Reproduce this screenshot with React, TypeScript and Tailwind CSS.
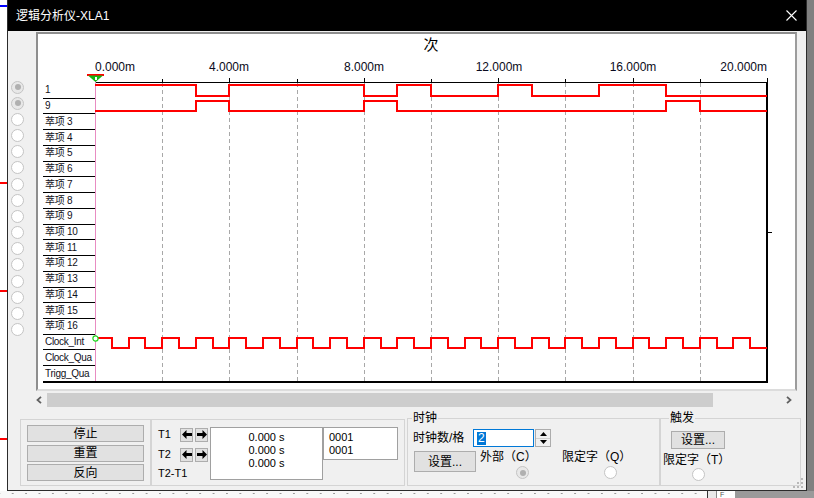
import React from "react";

/* ------------------ DATA ------------------ */
const ROW_H = 300 / 19;
const PX_PER_MS = 33.6;

const rowLabels = [
  "1",
  "9",
  ...Array.from({ length: 14 }, (_, i) => `萃项 ${i + 3}`),
  "Clock_Int",
  "Clock_Qua",
  "Trigg_Qua",
];

type Wave = { row: number; start: number; edges: number[] };

const waves: Wave[] = [
  { row: 0, start: 1, edges: [3, 4, 8, 9, 10, 12, 13, 15, 17] },
  { row: 1, start: 0, edges: [3, 4, 8, 9, 17, 18] },
  { row: 16, start: 1, edges: Array.from({ length: 39 }, (_, i) => (i + 1) / 2) },
];

const tickLabels = [
  { text: "0.000m", cls: "left-0" },
  { text: "4.000m", cls: "left-[134px] -translate-x-1/2" },
  { text: "8.000m", cls: "left-[269px] -translate-x-1/2" },
  { text: "12.000m", cls: "left-[404px] -translate-x-1/2" },
  { text: "16.000m", cls: "left-[538px] -translate-x-1/2" },
  { text: "20.000m", cls: "right-0" },
];

function wavePath(w: Wave) {
  const top = w.row * ROW_H;
  const hi = Math.round(top + 3.3);
  const lo = Math.round(top + 13.5);
  let lvl = w.start;
  let d = `M0 ${lvl ? hi : lo}`;
  for (const t of w.edges) {
    d += ` H${Math.round(t * PX_PER_MS)}`;
    lvl = 1 - lvl;
    d += ` V${lvl ? hi : lo}`;
  }
  return d + " H672";
}

/* ------------------ SMALL PARTS ------------------ */
function Radio({ on }: { on?: boolean }) {
  return on ? (
    <span className="flex h-[13px] w-[13px] items-center justify-center rounded-full border border-[#c4c4c4] bg-[#e8e8e8]">
      <span className="h-[6px] w-[6px] rounded-full bg-[#b0b0b0]" />
    </span>
  ) : (
    <span className="block h-[13px] w-[13px] rounded-full border border-[#c4c4c4] bg-white" />
  );
}

function ArrowBtn({ dir }: { dir: "l" | "r" }) {
  return (
    <span className="flex h-[14px] w-[13px] items-center justify-center border border-[#adadad] bg-[#e1e1e1]">
      <svg width="10" height="9" viewBox="0 0 10 9">
        {dir === "l" ? (
          <path d="M0 4.5 L4.5 0 V3 H10 V6 H4.5 V9 Z" fill="#000" />
        ) : (
          <path d="M10 4.5 L5.5 0 V3 H0 V6 H5.5 V9 Z" fill="#000" />
        )}
      </svg>
    </span>
  );
}

function Chevron({ dir }: { dir: "l" | "r" }) {
  return (
    <svg width="6" height="8" viewBox="0 0 6 8">
      <path
        d={dir === "l" ? "M5 0.8 L1.5 4 L5 7.2" : "M1 0.8 L4.5 4 L1 7.2"}
        stroke="#606060"
        strokeWidth="1.8"
        fill="none"
      />
    </svg>
  );
}

function Plot() {
  const grid = Array.from({ length: 9 }, (_, i) => Math.round((i + 1) * 67.2));
  const ticks = Array.from({ length: 11 }, (_, i) => Math.round(i * 67.2));
  return (
    <svg width="680" height="300" className="overflow-visible" shapeRendering="crispEdges">
      {grid.map((x) => (
        <line key={x} x1={x + 0.5} x2={x + 0.5} y1={1} y2={299} stroke="#a8a8a8" strokeDasharray="4 3" />
      ))}
      {ticks.map((x, i) => (
        <rect key={x} x={x} y={i % 2 === 0 ? -4 : -3} width="1" height={i % 2 === 0 ? 4 : 3} fill="#000" />
      ))}
      <rect x="0" y="0" width="673" height="1" fill="#000" />
      <rect x="671" y="0" width="2" height="300" fill="#000" />
      <rect x="673" y="150" width="4" height="1" fill="#000" />
      <rect x="-52" y="299" width="725" height="2" fill="#000" />
      <rect x="0" y="-6" width="1" height="305" fill="#e88cc2" />
      {waves.map((w) => (
        <path key={w.row} d={wavePath(w)} stroke="#ff0000" strokeWidth="2" fill="none" />
      ))}
      <rect x="-8" y="-8" width="17" height="1.5" fill="#ff0000" />
      <polygon points="-7,-6.5 8,-6.5 0.5,0" fill="#14b814" shapeRendering="auto" />
      <rect x="-0.5" y="-5" width="2" height="3" fill="#ffffff" />
      <circle cx="0.5" cy="256.5" r="2.6" fill="#fff" stroke="#1ed81e" strokeWidth="1.2" shapeRendering="auto" />
    </svg>
  );
}

/* ------------------ COMPONENT ------------------ */
export default function App() {
  return (
    <div className="flex h-[498px] w-[814px] flex-col overflow-hidden bg-white font-['Liberation_Sans','Noto_Sans_CJK_SC',sans-serif] text-black">
      <div className="flex h-[491px]">
        {/* schematic behind the window */}
        <div className="relative w-[7px] bg-white">
          <div className="absolute top-[5px] h-[2px] w-full bg-[#0000ff]" />
          <div className="absolute top-[182px] h-[2px] w-full bg-[#ff0000]" />
          <div className="absolute top-[290px] h-[2px] w-full bg-[#ff0000]" />
          <div className="absolute top-[438px] h-[2px] w-full bg-[#ff0000]" />
        </div>

        {/* window */}
        <div className="relative flex w-[800px] flex-col border-x border-b border-[#2b2b2b] bg-[#f0f0f0]">
          <div className="flex h-[31px] shrink-0 items-center justify-between bg-black pl-[8px] pr-[9px]">
            <span className="text-[12px] leading-none text-white">逻辑分析仪-XLA1</span>
            <svg width="11" height="11" viewBox="0 0 11 11">
              <path d="M0.5 0.5 L10.5 10.5 M10.5 0.5 L0.5 10.5" stroke="#fff" strokeWidth="1.1" />
            </svg>
          </div>

          <div className="flex">
            {/* channel radios */}
            <div className="flex w-[28px] flex-col pl-[3px] pt-[48px]">
              {Array.from({ length: 16 }, (_, i) => (
                <div key={i} className="flex h-[16.18px] items-center">
                  <Radio on={i < 2} />
                </div>
              ))}
            </div>

            {/* display panel */}
            <div className="mt-[1px] h-[359px] w-[761px] border-2 border-t-[#8e8e8e] border-l-[#8e8e8e] border-b-[#dcdcdc] border-r-[#9c9c9c] bg-white pl-[5px]">
              <div className="flex h-[48px]">
                <div className="w-[52px]" />
                <div className="relative w-[672px]">
                  <div className="pt-[3px] text-center text-[15px] leading-[16px]">次</div>
                  {tickLabels.map((t) => (
                    <span key={t.text} className={`absolute top-[26px] text-[12px] leading-[14px] text-[#0a0a20] ${t.cls}`}>
                      {t.text}
                    </span>
                  ))}
                </div>
              </div>
              <div className="flex h-[300px]">
                <div className="mt-[1px] flex w-[52px] flex-col">
                  {rowLabels.map((l, i) => (
                    <div
                      key={l}
                      className={`flex h-[15.79px] items-center overflow-hidden whitespace-nowrap pl-[2px] text-[10px] leading-none tracking-[-0.3px] text-[#101020] ${i < 18 ? "border-b border-black" : ""}`}
                    >
                      {l}
                    </div>
                  ))}
                </div>
                <Plot />
              </div>
            </div>
          </div>

          {/* horizontal scrollbar */}
          <div className="ml-[22px] mt-[2px] flex h-[14px] w-[767px]">
            <div className="flex w-[17px] items-center justify-center">
              <Chevron dir="l" />
            </div>
            <div className="w-[666px] bg-[#cdcdcd]" />
            <div className="flex-1" />
            <div className="flex w-[17px] items-center justify-center">
              <Chevron dir="r" />
            </div>
          </div>

          {/* controls */}
          <div className="ml-[12px] mt-[11px] flex h-[68px] items-start">
            <div className="mt-[1px] flex h-[67px] w-[131px] flex-col gap-[2.5px] border border-[#d4d4d4] px-[6px] pt-[5px]">
              {["停止", "重置", "反向"].map((b) => (
                <div key={b} className="flex h-[17px] items-center justify-center border border-[#adadad] bg-[#e1e1e1] text-[12px] leading-none">
                  {b}
                </div>
              ))}
            </div>

            <div className="mt-[1px] flex h-[67px] w-[254px] border border-[#d4d4d4] pl-[6px] pt-[7px] text-[11px]">
              <div className="flex w-[52px] flex-col">
                <div className="flex h-[15px] items-center">
                  <span className="w-[22px]">T1</span>
                  <div className="flex gap-[2px]">
                    <ArrowBtn dir="l" />
                    <ArrowBtn dir="r" />
                  </div>
                </div>
                <div className="mt-[5px] flex h-[15px] items-center">
                  <span className="w-[22px]">T2</span>
                  <div className="flex gap-[2px]">
                    <ArrowBtn dir="l" />
                    <ArrowBtn dir="r" />
                  </div>
                </div>
                <div className="mt-[4px] flex h-[15px] items-center">T2-T1</div>
              </div>
              <div className="flex h-[53px] w-[113px] flex-col items-center border border-[#a0a0a0] bg-white pt-[3px] leading-[13px]">
                <span>0.000 s</span>
                <span>0.000 s</span>
                <span>0.000 s</span>
              </div>
              <div className="flex h-[33px] w-[75px] flex-col border border-[#a0a0a0] bg-white pl-[5px] pt-[3px] leading-[13px]">
                <span>0001</span>
                <span>0001</span>
              </div>
            </div>

            <fieldset className="-mt-[7px] ml-[2px] h-[75px] w-[253px] border border-[#d4d4d4] text-[12px]">
              <legend className="ml-[4px] px-[1px] leading-[14px]">时钟</legend>
              <div className="mt-[4px] flex h-[18px] items-center pl-[5px]">
                <span className="w-[60px] leading-none">时钟数/格</span>
                <div className="flex h-[18px] w-[61px] items-center border border-[#0078d7] bg-white pl-[3px]">
                  <span className="bg-[#0078d7] px-[1px] leading-[13px] text-white">2</span>
                </div>
                <div className="ml-[1px] flex h-[18px] w-[16px] flex-col border border-[#acacac] bg-[#f0f0f0]">
                  <div className="flex flex-1 items-center justify-center border-b border-[#d0d0d0]">
                    <svg width="7" height="4" viewBox="0 0 7 4">
                      <path d="M0 4 L3.5 0 L7 4 Z" fill="#000" />
                    </svg>
                  </div>
                  <div className="flex flex-1 items-center justify-center">
                    <svg width="7" height="4" viewBox="0 0 7 4">
                      <path d="M0 0 L3.5 4 L7 0 Z" fill="#000" />
                    </svg>
                  </div>
                </div>
              </div>
              <div className="mt-[4px] flex items-start">
                <div className="ml-[6px] flex h-[21px] w-[62px] items-center justify-center border border-[#adadad] bg-[#e1e1e1] leading-none">
                  设置...
                </div>
                <div className="-mt-[1px] ml-[4px] flex w-[82px] flex-col">
                  <span className="leading-[14px]">外部（C）</span>
                  <span className="ml-[36px] mt-[2px]">
                    <Radio on />
                  </span>
                </div>
                <div className="-mt-[1px] flex flex-col">
                  <span className="leading-[14px]">限定字（Q）</span>
                  <span className="ml-[42px] mt-[2px]">
                    <Radio />
                  </span>
                </div>
              </div>
            </fieldset>

            <fieldset className="-mt-[7px] h-[75px] w-[141px] border border-[#d4d4d4] text-[12px]">
              <legend className="ml-[8px] px-[1px] leading-[14px]">触发</legend>
              <div className="ml-[10px] mt-[6px] flex h-[18px] w-[54px] items-center justify-center border border-[#adadad] bg-[#e1e1e1] leading-none">
                设置...
              </div>
              <div className="ml-[2px] mt-[4px] leading-[14px]">限定字（T）</div>
              <span className="ml-[31px] mt-[1px] block w-[13px]">
                <Radio />
              </span>
            </fieldset>
          </div>

          {/* size grip */}
          <svg className="absolute bottom-[2px] right-[3px]" width="10" height="10" viewBox="0 0 10 10">
            <rect x="8" y="0" width="2" height="2" fill="#b8b8b8" />
            <rect x="4" y="4" width="2" height="2" fill="#b8b8b8" />
            <rect x="8" y="4" width="2" height="2" fill="#b8b8b8" />
            <rect x="0" y="8" width="2" height="2" fill="#b8b8b8" />
            <rect x="4" y="8" width="2" height="2" fill="#b8b8b8" />
            <rect x="8" y="8" width="2" height="2" fill="#b8b8b8" />
          </svg>
        </div>

        <div className="w-[7px] bg-[#808080]" />
      </div>

      {/* workspace below */}
      <div className="flex h-[7px]">
        <div className="w-[707px] bg-[#f8f8f8] bg-[radial-gradient(circle,#9a9a9a_0.9px,transparent_1.1px)] bg-[length:13.4px_7px] bg-[position:6px_-1px]" />
        <div className="w-[1px] bg-[#333]" />
        <div className="w-[8px] bg-[#e8e8e8]" />
        <div className="flex w-[19px] items-center border-l border-[#888] bg-white pl-[3px] text-[7px] leading-[7px] text-[#555]">F</div>
        <div className="flex-1 bg-[#9a9a9a]" />
      </div>
    </div>
  );
}
